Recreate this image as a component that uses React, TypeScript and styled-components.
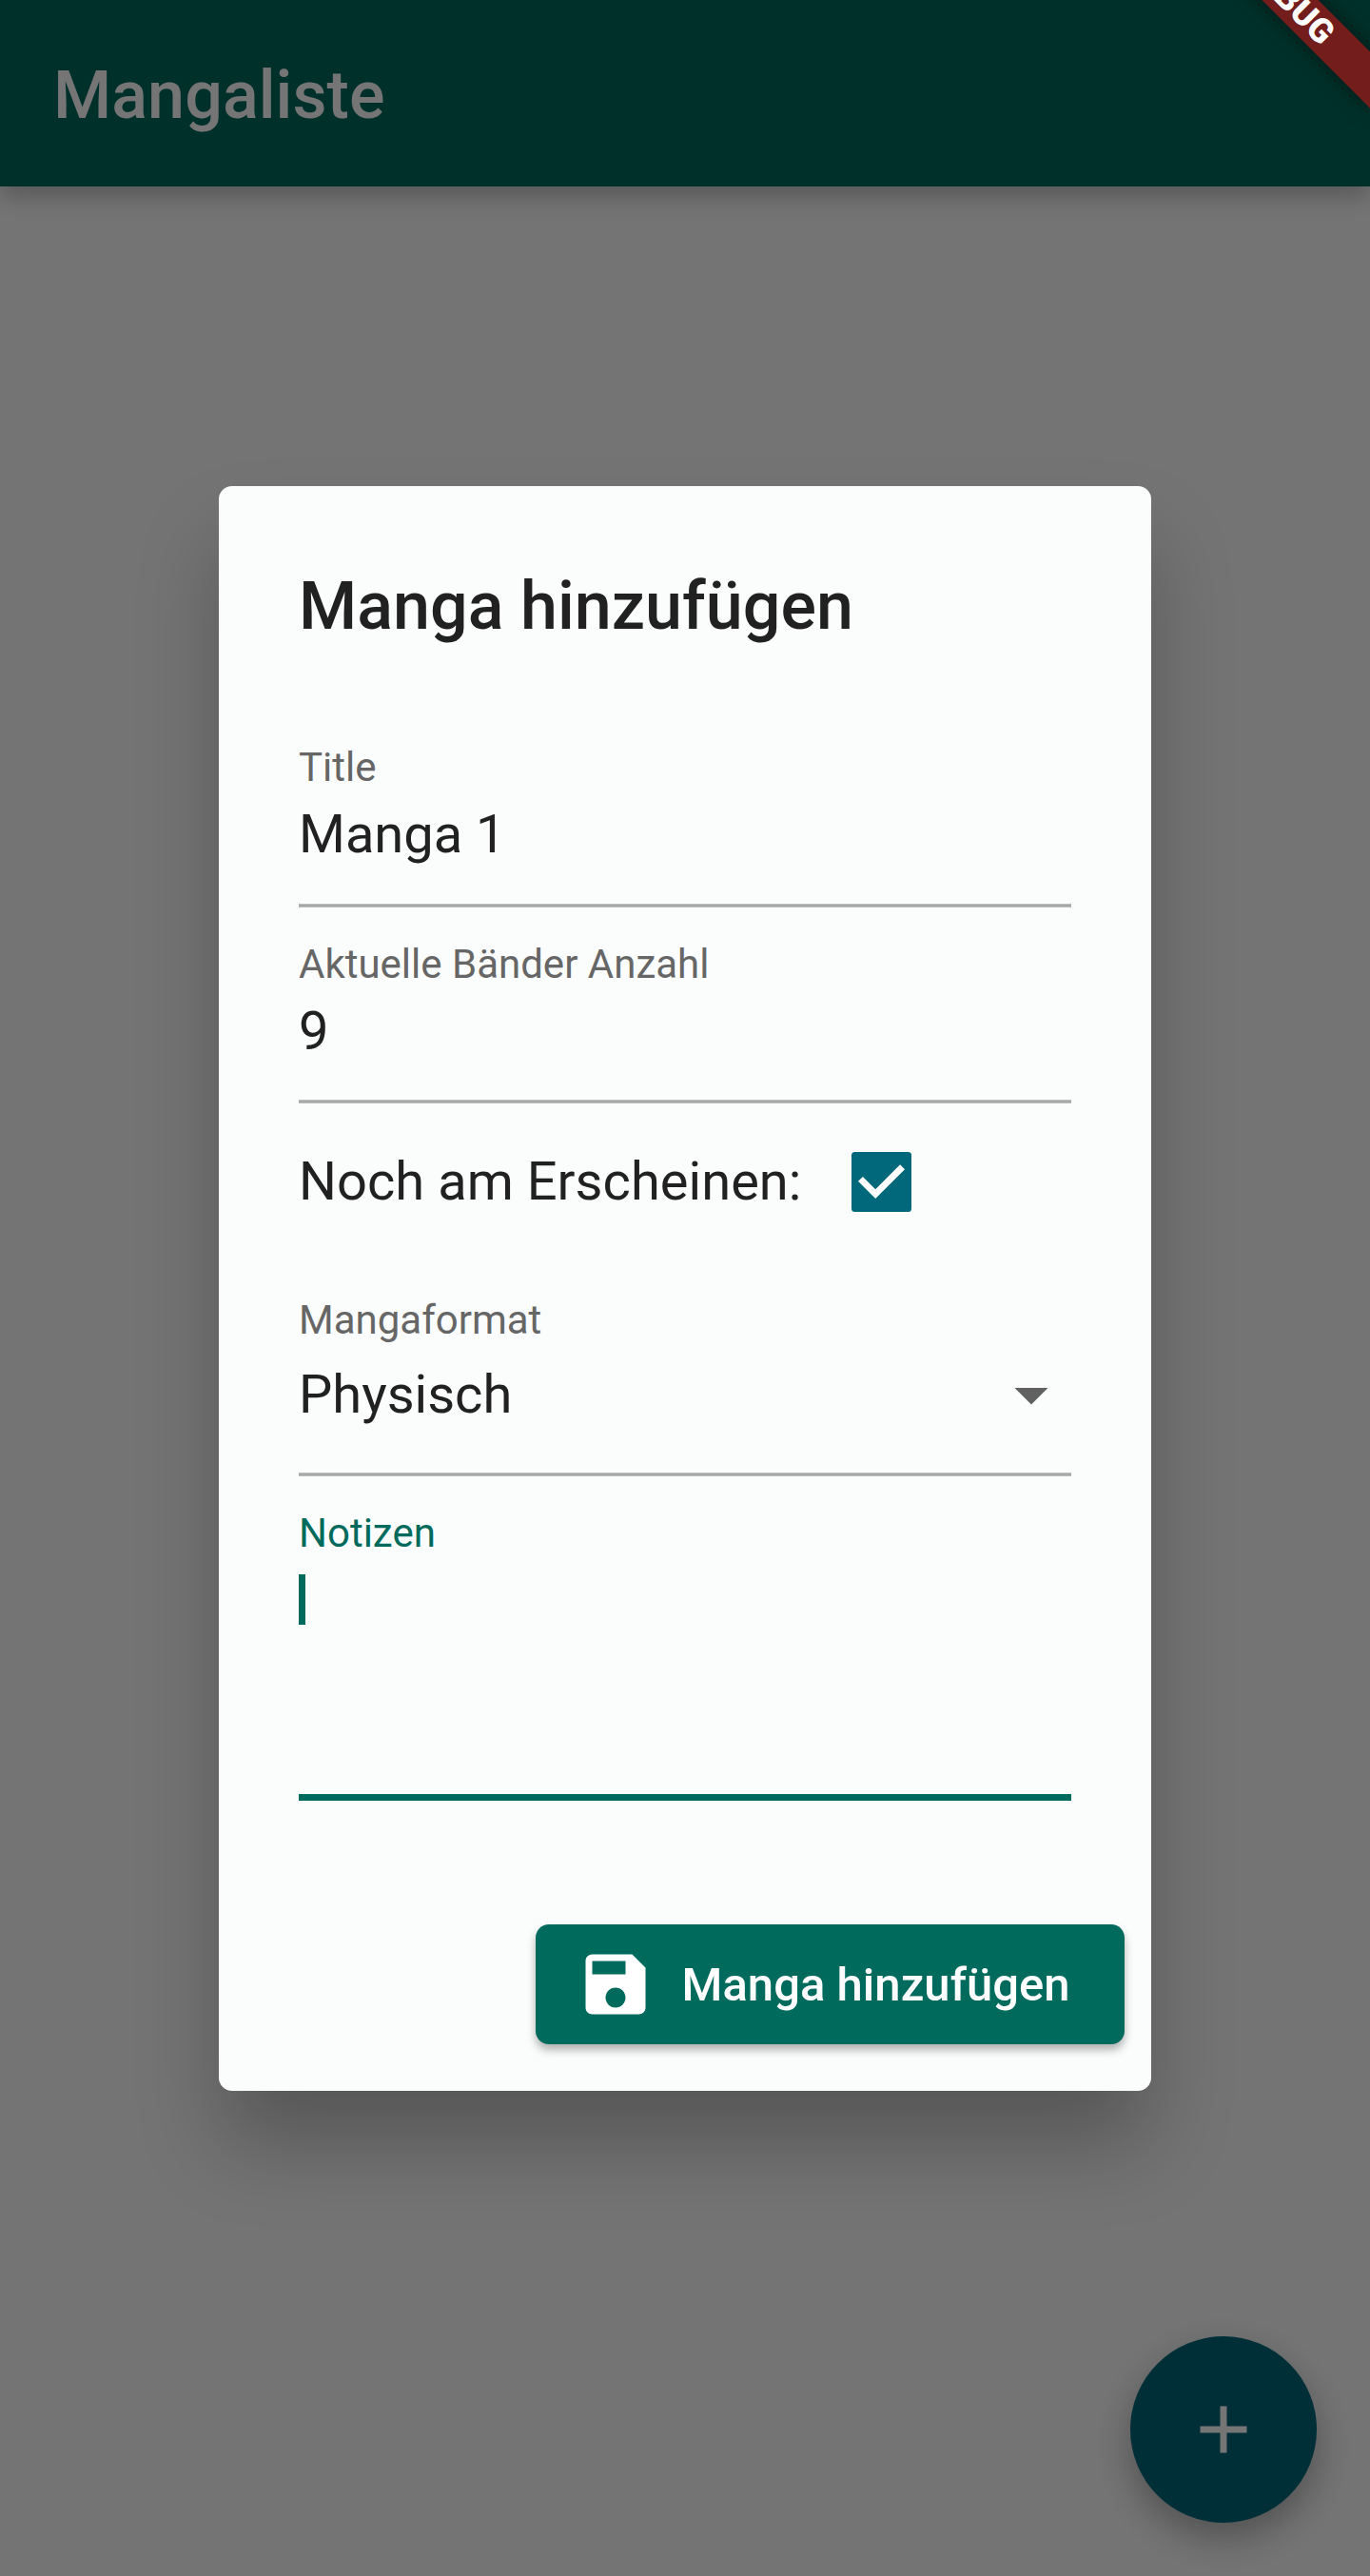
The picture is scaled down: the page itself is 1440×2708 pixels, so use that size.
import React from "react";
import styled, { createGlobalStyle } from "styled-components";

const colors = {
  primary: "#006a5d",
  secondary: "#00687a",
  surface: "#fbfdfc",
  text: "#212121",
  label: "#666666",
  line: "#a7a8a8",
  lineEdge: "#bcbdbd",
};

const GlobalStyle = createGlobalStyle`
  * { box-sizing: border-box; }
  html, body { margin: 0; padding: 0; }
  body { font-family: Roboto, "Liberation Sans", sans-serif; color: ${colors.text}; }
`;

const Screen = styled.div`
  position: relative;
  width: 1440px;
  height: 2708px;
  overflow: hidden;
  background: #fdfdfd;
`;

const AppBar = styled.header`
  height: 196px;
  padding: 4px 56px 0;
  display: flex;
  align-items: center;
  background: ${colors.primary};
  box-shadow: 0 10px 24px rgba(0, 0, 0, 0.25);
`;

const AppTitle = styled.h1`
  margin: 0;
  font-size: 70px;
  line-height: 82px;
  font-weight: 500;
  letter-spacing: 0.07px;
  color: #fff;
`;

const Fab = styled.button`
  position: absolute;
  right: 56px;
  bottom: 56px;
  width: 196px;
  height: 196px;
  padding: 0;
  border: 0;
  border-radius: 50%;
  display: flex;
  align-items: center;
  justify-content: center;
  color: #fff;
  background: ${colors.secondary};
  box-shadow: 0 16px 38px rgba(0, 0, 0, 0.3);
`;

const Scrim = styled.div`
  position: absolute;
  inset: 0;
  display: flex;
  align-items: center;
  justify-content: center;
  background: rgba(0, 0, 0, 0.54);
`;

const Dialog = styled.section`
  width: 980px;
  height: 1687px;
  border-radius: 14px;
  background: ${colors.surface};
  display: flex;
  flex-direction: column;
  box-shadow: 0 58px 88px -4px rgba(0, 0, 0, 0.26);
`;

const DialogTitle = styled.h2`
  margin: 0;
  padding: 85px 84px 0;
  height: 238.5px;
  font-size: 70px;
  line-height: 82px;
  font-weight: 500;
  letter-spacing: 0.04px;
`;

const Form = styled.form`
  padding: 0 84px;
  display: flex;
  flex-direction: column;
`;

const Field = styled.div<{ $height: number; $top: number }>`
  height: ${(p) => p.$height}px;
  padding-top: ${(p) => p.$top}px;
  display: flex;
  flex-direction: column;
`;

const Rule = styled.div<{ $focused?: boolean }>`
  margin-top: auto;
  height: ${(p) => (p.$focused ? 7 : 4)}px;
  background: ${(p) => (p.$focused ? colors.primary : colors.line)};
  border: 0 solid ${colors.lineEdge};
  border-width: ${(p) => (p.$focused ? 0 : "1px 0")};
`;

const Label = styled.label<{ $focused?: boolean }>`
  font-size: 42px;
  line-height: 50px;
  color: ${(p) => (p.$focused ? colors.primary : colors.label)};
`;

const Value = styled.div<{ $gap: number }>`
  margin-top: ${(p) => p.$gap}px;
  display: flex;
  align-items: center;
  justify-content: space-between;
  font-size: 56px;
  line-height: 66px;
`;

const DropArrow = styled.svg`
  width: 84px;
  height: 84px;
  margin: -9px 0;
  fill: #616161;
`;

const Caret = styled.span`
  width: 7px;
  height: 52.5px;
  margin-top: 18px;
  background: ${colors.primary};
`;

const CheckRow = styled.div`
  height: 164px;
  display: flex;
  align-items: center;
  gap: 53px;
  font-size: 56px;
  line-height: 66px;
  letter-spacing: 0.04px;
`;

const CheckBox = styled.span`
  width: 63px;
  height: 63px;
  border-radius: 3.5px;
  background: ${colors.secondary};
  display: flex;
`;

const Actions = styled.footer`
  margin-top: auto;
  padding: 0 28px 49px;
  display: flex;
  justify-content: flex-end;
`;

const SaveButton = styled.button`
  width: 619.5px;
  height: 126px;
  padding: 0 0 0 42px;
  border: 0;
  border-radius: 14px;
  display: flex;
  align-items: center;
  gap: 28px;
  font-family: inherit;
  font-size: 49px;
  line-height: 58px;
  font-weight: 500;
  letter-spacing: 0.03px;
  white-space: nowrap;
  color: #fff;
  background: ${colors.primary};
  box-shadow: 0 6px 10px rgba(0, 0, 0, 0.3);
`;

const ButtonText = styled.span`
  padding-top: 3px;
`;

const MaterialIcon = styled.svg`
  width: 84px;
  height: 84px;
  flex: none;
  fill: currentColor;
`;

const DebugBanner = styled.div`
  position: absolute;
  left: 1216px;
  top: -21.5px;
  width: 280px;
  height: 42px;
  transform: rotate(45deg);
  display: flex;
  align-items: center;
  justify-content: center;
  font-size: 35.7px;
  line-height: 42px;
  font-weight: 900;
  color: #fff;
  background: #731d1c;
  box-shadow: 0 0 21px rgba(0, 0, 0, 0.5);
`;

export default function App() {
  return (
    <Screen>
      <GlobalStyle />
      <AppBar>
        <AppTitle>Mangaliste</AppTitle>
      </AppBar>
      <Fab aria-label="Manga hinzufügen">
        <MaterialIcon viewBox="0 0 24 24">
          <path d="M19 13h-6v6h-2v-6H5v-2h6V5h2v6h6v2z" />
        </MaterialIcon>
      </Fab>
      <Scrim>
        <Dialog role="dialog">
          <DialogTitle>Manga hinzufügen</DialogTitle>
          <Form>
            <Field $height={205} $top={33}>
              <Label>Title</Label>
              <Value $gap={12}>Manga 1</Value>
              <Rule />
            </Field>
            <Field $height={206} $top={35}>
              <Label>Aktuelle Bänder Anzahl</Label>
              <Value $gap={12}>9</Value>
              <Rule />
            </Field>
            <CheckRow>
              <span>Noch am Erscheinen:</span>
              <CheckBox>
                <svg viewBox="0 0 18 18" width="63" height="63">
                  <path d="M2.7 8.1L7.2 12.6L15.3 4.5" fill="none" stroke="#fff" strokeWidth="2" />
                </svg>
              </CheckBox>
            </CheckRow>
            <Field $height={228} $top={39}>
              <Label>Mangaformat</Label>
              <Value $gap={20}>
                Physisch
                <DropArrow viewBox="0 0 24 24">
                  <path d="M7 10l5 5 5-5z" />
                </DropArrow>
              </Value>
              <Rule />
            </Field>
            <Field $height={341} $top={35}>
              <Label $focused>Notizen</Label>
              <Caret />
              <Rule $focused />
            </Field>
          </Form>
          <Actions>
            <SaveButton type="button">
              <MaterialIcon viewBox="0 0 24 24">
                <path
                  fillRule="evenodd"
                  d="M17 3H5c-1.11 0-2 .9-2 2v14c0 1.1.89 2 2 2h14c1.1 0 2-.9 2-2V7l-4-4zm-5 16c-1.66 0-3-1.34-3-3s1.34-3 3-3 3 1.34 3 3-1.34 3-3 3zm3-10H5V5h10v4z"
                />
              </MaterialIcon>
              <ButtonText>Manga hinzufügen</ButtonText>
            </SaveButton>
          </Actions>
        </Dialog>
      </Scrim>
      <DebugBanner>DEBUG</DebugBanner>
    </Screen>
  );
}
